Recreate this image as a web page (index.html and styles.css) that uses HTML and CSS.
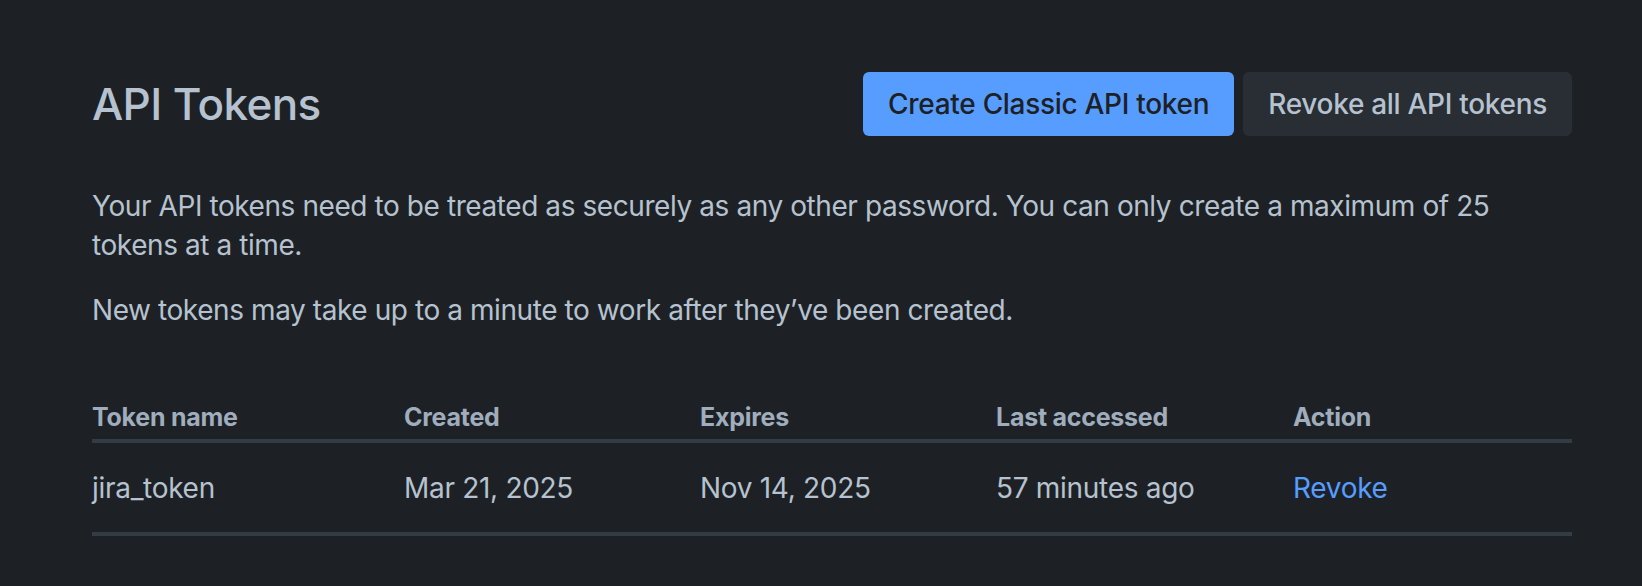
FILE: index.html
```html
<!DOCTYPE html>
<html lang="en">
<head>
<meta charset="utf-8">
<title>API Tokens</title>
<link rel="stylesheet" href="styles.css">
</head>
<body>
<main class="page">
  <header class="header">
    <h1 class="title">API Tokens</h1>
    <div class="actions">
      <button class="btn btn-primary">Create Classic API token</button>
      <button class="btn btn-subtle">Revoke all API tokens</button>
    </div>
  </header>
  <p class="text first">Your API tokens need to be treated as securely as any other password. You can only create a maximum of 25 tokens at a time.</p>
  <p class="text second">New tokens may take up to a minute to work after they’ve been created.</p>
  <table class="tokens">
    <colgroup>
      <col class="c-name">
      <col class="c-created">
      <col class="c-expires">
      <col class="c-last">
      <col class="c-action">
    </colgroup>
    <thead>
      <tr>
        <th>Token name</th>
        <th>Created</th>
        <th>Expires</th>
        <th>Last accessed</th>
        <th>Action</th>
      </tr>
    </thead>
    <tbody>
      <tr>
        <td>jira_token</td>
        <td>Mar 21, 2025</td>
        <td>Nov 14, 2025</td>
        <td>57 minutes ago</td>
        <td><a class="link" href="#">Revoke</a></td>
      </tr>
    </tbody>
  </table>
</main>
</body>
</html>
```
FILE: styles.css
```css
html, body {
  margin: 0;
  padding: 0;
  background: #1d2125;
}
body {
  font-family: Inter, "Noto Sans", "Liberation Sans", sans-serif;
  color: #b6c2cf;
}
.page {
  padding: 72px 70px 0 92px;
}
.header {
  display: flex;
  justify-content: space-between;
  align-items: center;
  height: 64px;
}
.title {
  margin: 0;
  font-size: 44px;
  font-weight: 500;
  letter-spacing: -0.6px;
  line-height: 64px;
  color: #b6c2cf;
}
.actions {
  display: flex;
  gap: 9px;
}
.btn {
  height: 64px;
  padding: 0 25px;
  border: 0;
  border-radius: 6px;
  font-family: inherit;
  font-size: 28px;
  font-weight: 500;
  letter-spacing: -0.3px;
}
.btn-primary {
  background: #579dff;
  color: #1d2125;
}
.btn-subtle {
  background: #282e33;
  color: #b6c2cf;
}
.text {
  margin: 0;
  font-size: 28px;
  line-height: 39px;
  letter-spacing: -0.42px;
}
.first {
  margin-top: 51px;
}
.second {
  margin-top: 26px;
}
.tokens {
  margin-top: 69px;
  width: 100%;
  border-collapse: collapse;
  table-layout: fixed;
}
.c-name { width: 312px; }
.c-created { width: 296px; }
.c-expires { width: 296px; }
.c-last { width: 297px; }
.tokens th {
  text-align: left;
  padding: 2px 0 6px 0;
  font-size: 25px;
  line-height: 32px;
  font-weight: 700;
  letter-spacing: -0.25px;
  color: #9fadbc;
  border-bottom: 4px solid #333b43;
}
.tokens td {
  padding: 26px 0 24px 0;
  font-size: 28px;
  line-height: 39px;
  letter-spacing: -0.3px;
  border-bottom: 4px solid #333b43;
}
.link {
  color: #579dff;
  text-decoration: none;
}
```
